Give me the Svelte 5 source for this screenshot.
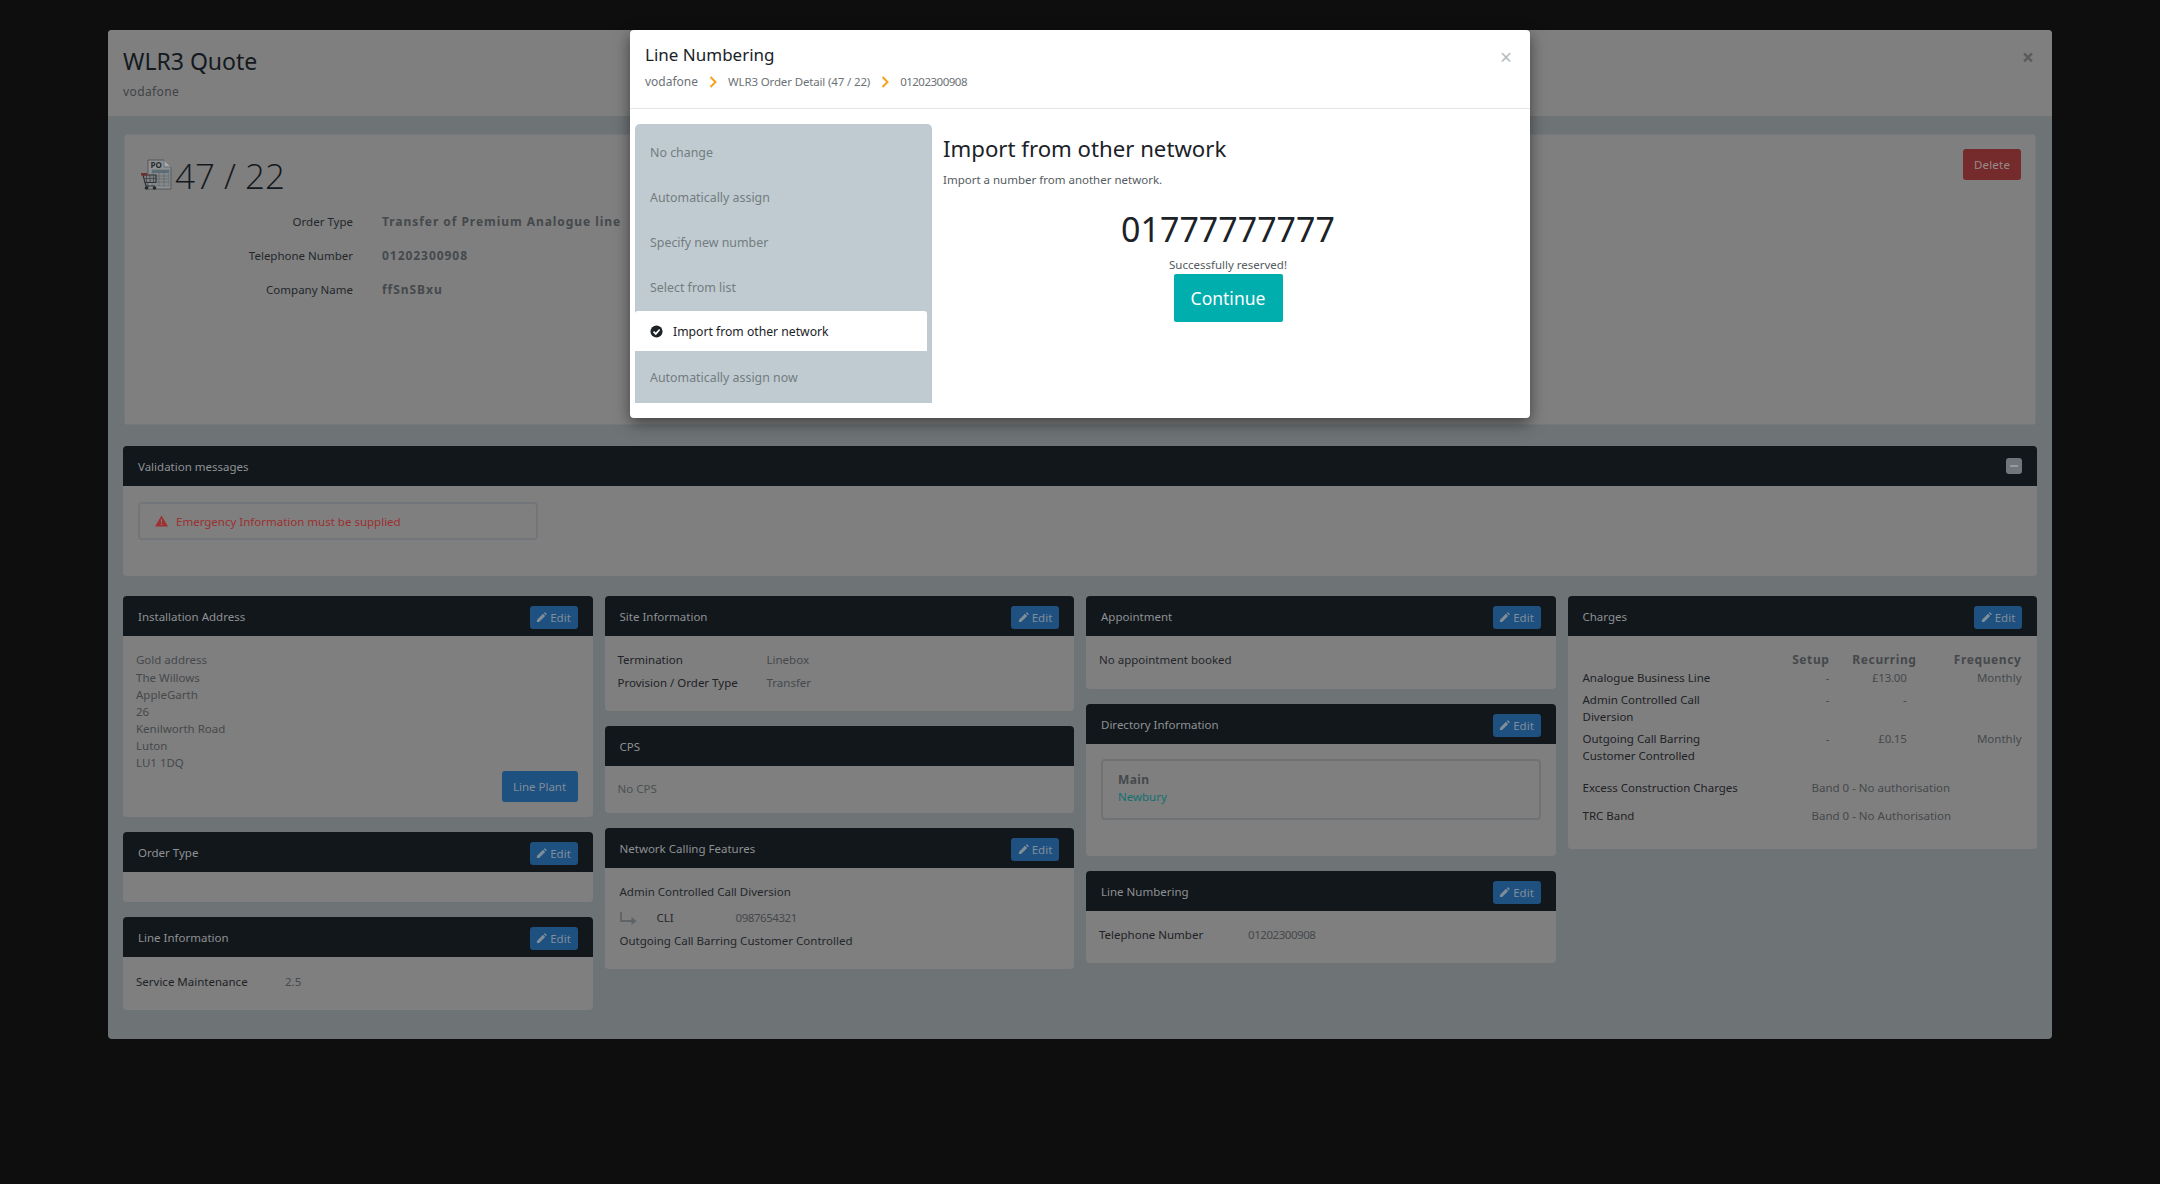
<script>
  const steps = ['No change', 'Automatically assign', 'Specify new number', 'Select from list', 'Import from other network', 'Automatically assign now'];
  const active = 'Import from other network';
  const address = ['Gold address', 'The Willows', 'AppleGarth', '26', 'Kenilworth Road', 'Luton', 'LU1 1DQ'];
  const summary = [
    ['Order Type', 'Transfer of Premium Analogue line'],
    ['Telephone Number', '01202300908'],
    ['Company Name', 'ffSnSBxu']
  ];
  const charges = [
    ['Analogue Business Line', '-', '£13.00', 'Monthly'],
    ['Admin Controlled Call Diversion', '-', '-', ''],
    ['Outgoing Call Barring Customer Controlled', '-', '£0.15', 'Monthly']
  ];
</script>

{#snippet edit()}
  <button class="edit">
    <svg viewBox="0 0 12 12" width="11" height="11"><path d="M1 8.600 7.600 2l2.400 2.400L3.400 11H1zM8.400 1.200l.5-.5a1 1 0 0 1 1.400 0l1 1a1 1 0 0 1 0 1.400l-.5.5z" fill="currentColor"/></svg>
    Edit
  </button>
{/snippet}

{#snippet cardHead(title, editable = true)}
  <div class="card-head">
    <span>{title}</span>
    {#if editable}{@render edit()}{/if}
  </div>
{/snippet}

<div class="page">
  <div class="shell">
    <header class="shell-head">
      <div>
        <h1>WLR3 Quote</h1>
        <div class="company">vodafone</div>
      </div>
      <span class="shell-close">×</span>
    </header>

    <div class="shell-body">
      <section class="order">
        <div class="order-main">
          <div class="order-title">
            <svg class="po" viewBox="0 0 31 32" width="31" height="32">
              <path d="M7 1h16l7 7v22H7z" fill="#8e9193" stroke="#55595c"/>
              <path d="M23 1v7h7" fill="#a6a8a9" stroke="#6a6e70"/>
              <text x="9.500" y="9" class="po-text">PO</text>
              <rect x="11" y="11" width="17" height="16" fill="#85898b" stroke="#5f6669" stroke-width=".6"/>
              <path d="M11 11h17v3H11z" fill="#5b6d77"/>
              <path d="M11 17h17M11 20h17M11 23h17M18 11v16M23 11v16" stroke="#5f6669" stroke-width=".7"/>
              <path d="M2 16h13v7.500H4z" fill="#7f7f7f" stroke="#2f3335" stroke-width="1.200"/>
              <path d="M5.500 16v7.500M9 16v7.500M12.500 16v7.500M3 19.500h12" stroke="#3a3e40" stroke-width=".7"/>
              <path d="M4 23.500 5 27h9" fill="none" stroke="#2f3335" stroke-width="1.200"/>
              <path d="M0 14h6v2.500H0z" fill="#6e2f2f"/>
              <circle cx="5.500" cy="29" r="1.800" fill="#26292b"/>
              <circle cx="13.500" cy="29" r="1.800" fill="#26292b"/>
            </svg>
            <span>47 / 22</span>
          </div>
          <dl class="summary">
            {#each summary as [label, value]}
              <dt>{label}</dt>
              <dd>{value}</dd>
            {/each}
          </dl>
        </div>
        <button class="delete">Delete</button>
      </section>

      <section class="card validation">
        <div class="card-head">
          <span>Validation messages</span>
          <span class="collapse"><i></i></span>
        </div>
        <div class="validation-body">
          <div class="alert">
            <svg viewBox="0 0 14 12" width="13" height="12"><path d="M7 0 14 12H0z" fill="#a03030"/><path d="M6.300 4h1.400l-.2 4h-1zM6.300 9h1.400v1.400H6.300z" fill="#7f7f7f"/></svg>
            Emergency Information must be supplied
          </div>
        </div>
      </section>

      <div class="columns">
        <div class="col">
          <section class="card">
            {@render cardHead('Installation Address')}
            <div class="card-body address">
              {#each address as line}<div>{line}</div>{/each}
              <div class="plant-row"><button class="plant">Line Plant</button></div>
            </div>
          </section>
          <section class="card">
            {@render cardHead('Order Type')}
            <div class="card-body empty"></div>
          </section>
          <section class="card">
            {@render cardHead('Line Information')}
            <div class="card-body info">
              <div class="field"><b>Service Maintenance</b><span>2.5</span></div>
            </div>
          </section>
        </div>

        <div class="col">
          <section class="card">
            {@render cardHead('Site Information')}
            <div class="card-body site">
              <div class="field"><b>Termination</b><span>Linebox</span></div>
              <div class="field"><b>Provision / Order Type</b><span>Transfer</span></div>
            </div>
          </section>
          <section class="card">
            {@render cardHead('CPS', false)}
            <div class="card-body muted">No CPS</div>
          </section>
          <section class="card">
            {@render cardHead('Network Calling Features')}
            <div class="card-body network">
              <div class="feature">Admin Controlled Call Diversion</div>
              <div class="cli">
                <svg viewBox="0 0 17 13" width="17" height="13"><path d="M1 0v9h11" fill="none" stroke="#5f6366" stroke-width="1.800"/><path d="M11.500 5 16.500 9 11.500 13z" fill="#5f6366"/></svg>
                <b>CLI</b>
                <span class="num">0987654321</span>
              </div>
              <div class="feature">Outgoing Call Barring Customer Controlled</div>
            </div>
          </section>
        </div>

        <div class="col">
          <section class="card">
            {@render cardHead('Appointment')}
            <div class="card-body dark">No appointment booked</div>
          </section>
          <section class="card">
            {@render cardHead('Directory Information')}
            <div class="card-body directory">
              <div class="dir-box">
                <strong>Main</strong>
                <span>Newbury</span>
              </div>
            </div>
          </section>
          <section class="card">
            {@render cardHead('Line Numbering')}
            <div class="card-body phone">
              <div class="field"><b>Telephone Number</b><span class="num">01202300908</span></div>
            </div>
          </section>
        </div>

        <div class="col">
          <section class="card">
            {@render cardHead('Charges')}
            <div class="card-body charges">
              <div class="charge-grid">
                <span></span><strong>Setup</strong><strong>Recurring</strong><strong>Frequency</strong>
                {#each charges as [name, setup, recurring, frequency]}
                  <b>{name}</b>
                  <span>{setup}</span>
                  <span class="recurring">{recurring}</span>
                  <span>{frequency}</span>
                {/each}
              </div>
              <div class="band"><b>Excess Construction Charges</b><span>Band 0 - No authorisation</span></div>
              <div class="band"><b>TRC Band</b><span>Band 0 - No Authorisation</span></div>
            </div>
          </section>
        </div>
      </div>
    </div>
  </div>

  <div class="dialog">
    <header class="dialog-head">
      <div>
        <h2>Line Numbering</h2>
        <nav class="crumbs">
          <span class="vf">vodafone</span>
          <svg viewBox="0 0 8 12" width="8" height="12"><path d="M1.500 1 6.500 6l-5 5" fill="none" stroke="#f5a11c" stroke-width="2"/></svg>
          <span>WLR3 Order Detail (47 / 22)</span>
          <svg viewBox="0 0 8 12" width="8" height="12"><path d="M1.500 1 6.500 6l-5 5" fill="none" stroke="#f5a11c" stroke-width="2"/></svg>
          <span class="num">01202300908</span>
        </nav>
      </div>
      <span class="dialog-close">×</span>
    </header>
    <div class="dialog-body">
      <ul class="steps">
        {#each steps as step}
          <li class:active={step === active}>
            {#if step === active}
              <svg viewBox="0 0 14 14" width="13" height="13"><circle cx="7" cy="7" r="6.500" fill="#1b2228"/><path d="M3.800 7.200 6.200 9.600 10.400 4.800" fill="none" stroke="#fff" stroke-width="1.800"/></svg>
            {/if}
            {step}
          </li>
        {/each}
      </ul>
      <div class="pane">
        <h3>Import from other network</h3>
        <p class="hint">Import a number from another network.</p>
        <div class="result">
          <div class="number">01777777777</div>
          <div class="reserved">Successfully reserved!</div>
          <button class="continue">Continue</button>
        </div>
      </div>
    </div>
  </div>
</div>

<style>
  :global(body) {
    margin: 0;
    background: #0e0e0e;
    font-family: "Noto Sans", "Open Sans", sans-serif;
    font-size: 11.5px;
    color: #23272b;
  }

  button {
    font-family: inherit;
    border: 0;
    padding: 0;
  }

  .num {
    letter-spacing: -.45px;
  }

  .page {
    position: relative;
    height: 1184px;
    padding: 30px 108px 0;
    box-sizing: border-box;
    overflow: hidden;
  }

  .shell {
    height: 1009px;
    background: #6e7376;
    border-radius: 4px;
    overflow: hidden;
  }

  .shell-head {
    height: 86px;
    box-sizing: border-box;
    padding: 15px 15px 0 15px;
    background: #7f7f7f;
    display: flex;
    justify-content: space-between;
  }

  h1 {
    margin: 0;
    font-size: 23px;
    line-height: 32px;
    font-weight: 400;
    color: #14191e;
  }

  .company {
    margin-top: 7px;
    font-size: 12px;
    line-height: 16px;
    color: #3f4346;
    letter-spacing: .4px;
  }

  .shell-close {
    font-size: 21px;
    line-height: 24px;
    font-weight: 700;
    color: #5a5a5a;
    margin-right: 3px;
  }

  .shell-body {
    padding: 18px 15px 0;
  }

  .order {
    height: 291px;
    margin: 0 1px;
    box-sizing: border-box;
    padding: 14px 14px 0 16px;
    background: #7f7f7f;
    border: 1px solid #75797b;
    border-radius: 3px;
    display: flex;
    justify-content: space-between;
    align-items: flex-start;
  }

  .order-title {
    display: flex;
    align-items: center;
    height: 54px;
    margin-top: -1px;
    margin-bottom: -1px;
    font-size: 35px;
    font-weight: 300;
    color: #14191e;
    font-family: "Open Sans", sans-serif;
  }

  .po {
    flex: none;
    margin-right: 3px;
  }

  .po-text {
    font-size: 8px;
    font-weight: 700;
    fill: #26292b;
  }

  .summary {
    margin: 12px 0 0;
    display: grid;
    grid-template-columns: 212px auto;
    column-gap: 29px;
    row-gap: 16px;
    line-height: 18px;
  }

  .summary dt {
    text-align: right;
    color: #23272b;
  }

  .summary dd {
    margin: 0;
    font-size: 12px;
    font-weight: 700;
    color: #45494c;
    letter-spacing: .95px;
  }

  .delete {
    width: 58px;
    height: 31px;
    background: #752a2b;
    border-radius: 3px;
    color: #958c8c;
    font-size: 11.5px;
    letter-spacing: .2px;
  }

  .card {
    background: #7f7f7f;
    border-radius: 4px;
    overflow: hidden;
  }

  .card-head {
    height: 40px;
    box-sizing: border-box;
    padding: 0 15px;
    background: #12171c;
    color: #8e9193;
    display: flex;
    align-items: center;
    justify-content: space-between;
  }

  .validation {
    height: 130px;
    margin-top: 21px;
  }

  .collapse {
    width: 16px;
    height: 16px;
    background: #6f777c;
    border-radius: 3px;
    display: flex;
    align-items: center;
    justify-content: center;
  }

  .collapse i {
    width: 8px;
    height: 1.5px;
    background: #969a9c;
  }

  .validation-body {
    padding: 16px 15px;
  }

  .alert {
    width: 400px;
    height: 38px;
    box-sizing: border-box;
    padding-left: 15px;
    border: 2px solid #72767a;
    border-radius: 4px;
    color: #9c3030;
    display: flex;
    align-items: center;
    gap: 8px;
  }

  .columns {
    margin-top: 20px;
    display: grid;
    grid-template-columns: repeat(4, 1fr);
    column-gap: 12px;
    align-items: start;
  }

  .col {
    display: flex;
    flex-direction: column;
    gap: 15px;
  }

  .edit {
    width: 48px;
    height: 23px;
    margin-top: 3px;
    background: #1e5080;
    border-radius: 3px;
    color: #808e9a;
    font-size: 11.5px;
    display: flex;
    align-items: center;
    justify-content: center;
    gap: 3px;
  }

  .card-body {
    padding: 14px 14px 15px 13px;
    line-height: 20px;
    color: #23272b;
  }

  .empty {
    height: 30px;
    padding: 0;
  }

  .info {
    padding-top: 13px;
    padding-bottom: 17px;
  }

  .site {
    padding-top: 12px;
    padding-bottom: 17px;
  }

  .phone {
    padding-top: 12px;
    padding-bottom: 17px;
  }

  .address {
    color: #45494c;
    line-height: 17px;
    padding-top: 15px;
  }

  .address > div:first-child {
    margin-bottom: 1px;
  }

  .plant-row {
    display: flex;
    justify-content: flex-end;
    margin-right: 1px;
  }

  .plant {
    width: 76px;
    height: 31px;
    background: #1e5080;
    border-radius: 3px;
    color: #808e9a;
    font-size: 11.5px;
  }

  .field {
    display: grid;
    grid-template-columns: 149px 1fr;
    height: 23px;
    align-items: center;
  }

  .field b,
  .charges b {
    font-weight: 400;
    color: #1e2226;
  }

  .field span {
    color: #45494c;
  }

  .muted {
    color: #4c5053;
    padding-top: 13px;
    padding-bottom: 14px;
  }

  .dark {
    padding-bottom: 19px;
  }

  .network {
    padding: 15px 15px 19px;
  }

  .feature {
    line-height: 18px;
  }

  .cli {
    display: flex;
    align-items: center;
    height: 28px;
    margin-top: 3px;
  }

  .cli svg {
    flex: none;
    margin-right: 20px;
  }

  .cli b {
    width: 79px;
    font-weight: 400;
  }

  .cli span {
    color: #45494c;
  }

  .directory {
    padding: 15px 15px 36px;
  }

  .dir-box {
    height: 61px;
    box-sizing: border-box;
    padding: 10px 15px;
    border: 2px solid #6f7376;
    border-radius: 4px;
    line-height: 17px;
    display: flex;
    flex-direction: column;
  }

  .dir-box strong {
    font-size: 12px;
    letter-spacing: .4px;
    color: #45494c;
  }

  .dir-box span {
    color: #146f72;
  }

  .charges {
    padding: 15px 15px 25px;
  }

  .charge-grid {
    display: grid;
    grid-template-columns: 162px 85px 87px 105px;
    line-height: 17px;
    color: #45494c;
    text-align: right;
  }

  .charge-grid strong {
    font-size: 12px;
    letter-spacing: .6px;
    padding-bottom: 1px;
  }

  .charge-grid b {
    text-align: left;
    padding-bottom: 5px;
  }

  .recurring {
    padding-right: 10px;
    letter-spacing: -.25px;
  }

  .band {
    display: grid;
    grid-template-columns: 229px 1fr;
    margin-top: 11px;
    line-height: 17px;
    color: #45494c;
  }

  .charge-grid + .band {
    margin-top: 10px;
  }

  .dialog {
    position: absolute;
    left: 630px;
    top: 30px;
    width: 900px;
    height: 388px;
    background: #fff;
    border-radius: 4px;
    box-shadow: 0 5px 15px rgba(0, 0, 0, .5);
    overflow: hidden;
  }

  .dialog-head {
    height: 79px;
    box-sizing: border-box;
    padding: 12px 15px 0;
    border-bottom: 1px solid #e5e5e5;
    display: flex;
    justify-content: space-between;
  }

  h2 {
    margin: 0;
    font-size: 17px;
    line-height: 26px;
    font-weight: 400;
    color: #1b2228;
  }

  .crumbs {
    margin-top: 5px;
    display: flex;
    align-items: center;
    gap: 11px;
    font-size: 11.5px;
    line-height: 18px;
    color: #6c7277;
    letter-spacing: -.15px;
  }

  .crumbs .vf {
    font-size: 12px;
    letter-spacing: 0;
  }

  .crumbs .num {
    letter-spacing: -.5px;
  }

  .dialog-close {
    font-size: 21px;
    line-height: 30px;
    font-weight: 400;
    color: #b9bcbe;
    margin-right: 3px;
  }

  .dialog-body {
    display: flex;
    padding-top: 15px;
  }

  .steps {
    list-style: none;
    margin: 0 0 0 5px;
    padding: 6px 0 3px;
    width: 297px;
    height: 279px;
    box-sizing: border-box;
    background: #bfcbd0;
    border-radius: 5px 5px 0 0;
    flex: none;
    font-size: 12.4px;
  }

  .steps li {
    height: 45px;
    box-sizing: border-box;
    padding-left: 15px;
    display: flex;
    align-items: center;
    gap: 10px;
    color: #747c81;
  }

  .steps li.active {
    height: 40px;
    margin: 1px 5px 4px 0;
    padding-top: 1px;
    background: #fff;
    color: #1b2228;
    font-size: 12.2px;
    border-radius: 3px 3px 0 0;
  }

  .pane {
    flex: 1;
    padding: 7px 17px 0 11px;
    color: #555b60;
  }

  h3 {
    margin: 0;
    font-size: 22.2px;
    line-height: 36px;
    font-weight: 400;
    color: #1b2228;
  }

  .hint {
    margin: 4px 0 0;
    line-height: 18px;
  }

  .result {
    margin-top: 15px;
    display: flex;
    flex-direction: column;
    align-items: center;
  }

  .number {
    font-size: 34px;
    line-height: 50px;
    color: #1b2228;
  }

  .reserved {
    margin-top: 3px;
    line-height: 16px;
  }

  .continue {
    width: 109px;
    height: 48px;
    margin-top: 1px;
    background: #00aeae;
    border-radius: 2px;
    color: #fff;
    font-size: 17.5px;
  }
</style>
